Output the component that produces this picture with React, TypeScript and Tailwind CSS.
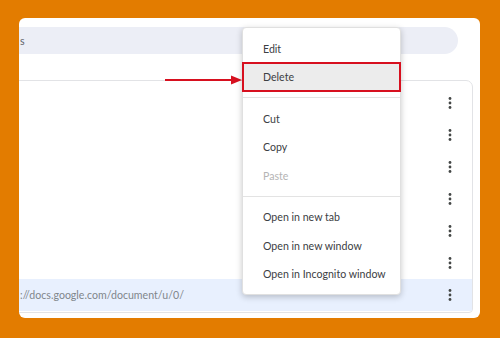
import React from 'react'

const font = { fontFamily: 'Lato, "Noto Sans", Arial, sans-serif' }

function Kebab() {
  return (
    <svg width="4" height="14" viewBox="0 0 4 14" className="text-[#444746]">
      <circle cx="2" cy="2.5" r="1.4" fill="currentColor" />
      <circle cx="2" cy="7" r="1.4" fill="currentColor" />
      <circle cx="2" cy="11.5" r="1.4" fill="currentColor" />
    </svg>
  )
}

function MenuItem({ label, disabled, active }: { label: string; disabled?: boolean; active?: boolean }) {
  return (
    <div
      className={`flex h-[28.5px] items-center whitespace-nowrap px-5 pt-[3px] text-[10.6px] ${disabled ? 'text-[#b4b4b4]' : 'text-[#3c4043]'} ${active ? 'bg-[#ececec] outline-2 -outline-offset-1 outline-[#d7101f]' : ''}`}
    >
      {label}
    </div>
  )
}

function Separator() {
  return <div className="my-[6px] h-px bg-[#e3e3e3]" />
}

export default function App() {
  const rows = [0, 1, 2, 3, 4, 5, 6]
  return (
    <div className="h-[338px] w-[500px] bg-[#e37c00] pl-[19px] pt-[18px]" style={font}>
      <div className="relative h-[300px] w-[461px] overflow-hidden rounded-[6px] bg-white">
        <div className="mt-[9px] flex h-[27px] w-[439px] items-center rounded-r-full bg-[#eceef6] pt-[2px] text-[10.6px] text-[#5f6368]">
          <span className="ml-px">s</span>
        </div>

        <div className="-ml-[10px] mt-[26px] h-[233px] w-[464px] rounded-tr-[7px] rounded-br-[4px] border border-[#e2e3e6] pt-[6px]">
          {rows.map((r) => (
            <div
              key={r}
              className={`flex h-8 items-center justify-between pr-[20px] ${r === 6 ? 'bg-[#e8f0fe]' : ''}`}
            >
              <span className="whitespace-nowrap pl-[10px] pt-[2px] text-[10.6px] text-[#80868b]">
                {r === 6 ? '://docs.google.com/document/u/0/' : ''}
              </span>
              <Kebab />
            </div>
          ))}
        </div>

        <svg className="absolute left-[146px] top-[56px]" width="78" height="12" viewBox="0 0 78 12">
          <line x1="0" y1="6" x2="68" y2="6" stroke="#d7101f" strokeWidth="2" />
          <polygon points="66,1.5 77,6 66,10.5" fill="#d7101f" />
        </svg>

        <div className="absolute left-[223px] top-[9px] w-[159px] rounded-[4px] border border-[#e0e0e0] bg-white py-[6px] shadow-[0_2px_6px_rgba(0,0,0,0.22)]">
          <MenuItem label="Edit" />
          <MenuItem label="Delete" active />
          <Separator />
          <MenuItem label="Cut" />
          <MenuItem label="Copy" />
          <MenuItem label="Paste" disabled />
          <Separator />
          <MenuItem label="Open in new tab" />
          <MenuItem label="Open in new window" />
          <MenuItem label="Open in Incognito window" />
        </div>
      </div>
    </div>
  )
}
